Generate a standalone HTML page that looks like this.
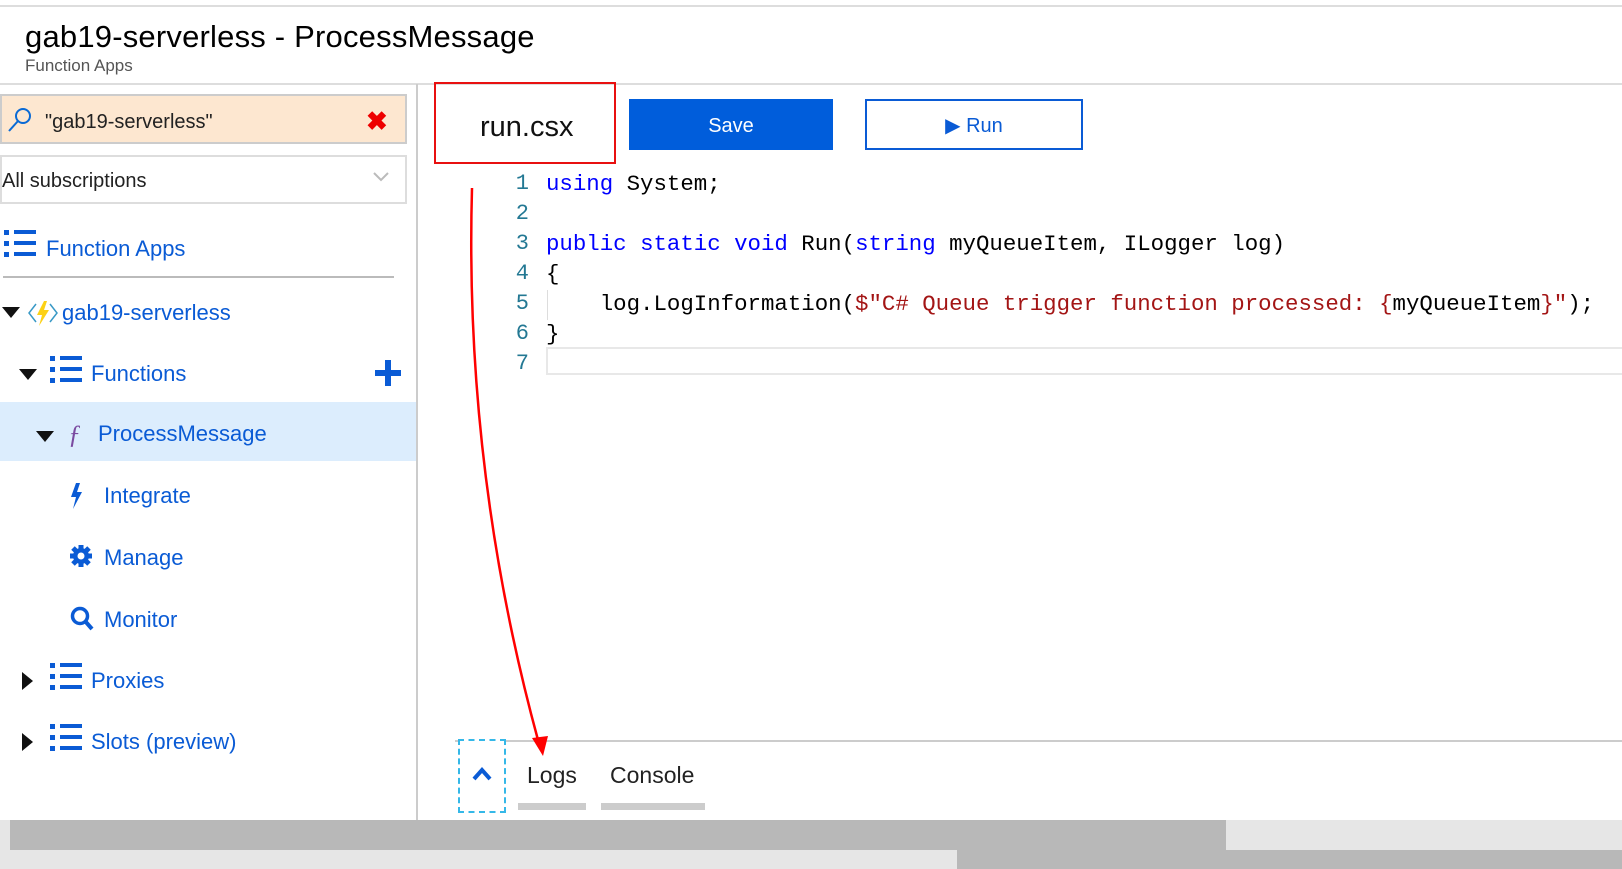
<!DOCTYPE html>
<html><head><meta charset="utf-8"><style>
*{margin:0;padding:0;box-sizing:border-box}
body{width:1622px;height:869px;overflow:hidden;background:#fff;font-family:"Liberation Sans",sans-serif;position:relative}
.a{position:absolute}
.nav{position:absolute;color:#0a5bd5;font-size:22px;white-space:nowrap}
.code{position:absolute;left:546px;font-family:"Liberation Mono",monospace;font-size:22.4px;white-space:pre;color:#000;line-height:30px}
.ln{position:absolute;left:500px;width:29px;text-align:right;font-family:"Liberation Mono",monospace;font-size:22px;color:#237893;line-height:30px}
.k{color:#0000ff}.s{color:#a31515}
.list{position:absolute;width:34px;height:30px}
</style></head><body>
<div class="a" style="left:0;top:5px;width:1622px;height:2px;background:#ddd"></div>
<div class="a" style="left:25px;top:19px;font-size:31px;color:#000;letter-spacing:0.2px">gab19-serverless - ProcessMessage</div>
<div class="a" style="left:25px;top:56px;font-size:17px;color:#555">Function Apps</div>
<div class="a" style="left:0;top:83px;width:1622px;height:2px;background:#ddd"></div>
<div class="a" style="left:416px;top:84px;width:2px;height:736px;background:#ccc"></div>

<div class="a" style="left:0;top:94px;width:407px;height:50px;background:#fde7d0;border:2px solid #ccc"></div>
<svg class="a" style="left:6px;top:106px" width="28" height="28" viewBox="0 0 28 28"><circle cx="17" cy="10" r="7" fill="none" stroke="#0a6ad5" stroke-width="2"/><line x1="12" y1="15" x2="3" y2="25" stroke="#0a6ad5" stroke-width="2"/></svg>
<div class="a" style="left:45px;top:111px;font-size:20px;color:#222">"gab19-serverless"</div>
<div class="a" style="left:366px;top:106px;font-size:26px;color:#e00;font-weight:bold">✖</div>
<div class="a" style="left:0;top:155px;width:407px;height:49px;border:2px solid #ddd"></div>
<div class="a" style="left:2px;top:170px;font-size:20px;color:#222">All subscriptions</div>
<svg class="a" style="left:372px;top:170px" width="18" height="14"><polyline points="2,3 9,10 16,3" fill="none" stroke="#bbb" stroke-width="2"/></svg>

<svg class="list" style="left:4px;top:230px"><g fill="#0a5bd5"><rect x="0" y="0" width="5" height="5"/><rect x="10" y="0" width="22" height="4"/><rect x="0" y="11" width="5" height="5"/><rect x="10" y="11" width="22" height="4"/><rect x="0" y="22" width="5" height="5"/><rect x="10" y="22" width="22" height="4"/></g></svg>
<div class="nav" style="left:46px;top:236px">Function Apps</div>
<div class="a" style="left:3px;top:276px;width:391px;height:2px;background:#bbb"></div>

<div class="a" style="left:2px;top:307px;width:0;height:0;border-left:9px solid transparent;border-right:9px solid transparent;border-top:11px solid #111"></div>
<svg class="a" style="left:27px;top:298px" width="32" height="30"><polyline points="9,6 2,15 9,24" fill="none" stroke="#3999c6" stroke-width="1.5"/><polyline points="23,6 30,15 23,24" fill="none" stroke="#3999c6" stroke-width="1.5"/><polygon points="17,3 10,17 15,17 12,28 22,12 17,12 20,3" fill="#fcd116"/></svg>
<div class="nav" style="left:62px;top:300px">gab19-serverless</div>

<div class="a" style="left:19px;top:369px;width:0;height:0;border-left:9px solid transparent;border-right:9px solid transparent;border-top:11px solid #111"></div>
<svg class="list" style="left:50px;top:356px"><g fill="#0a5bd5"><rect x="0" y="0" width="5" height="5"/><rect x="10" y="0" width="22" height="4"/><rect x="0" y="11" width="5" height="5"/><rect x="10" y="11" width="22" height="4"/><rect x="0" y="22" width="5" height="5"/><rect x="10" y="22" width="22" height="4"/></g></svg>
<div class="nav" style="left:91px;top:361px">Functions</div>
<svg class="a" style="left:375px;top:360px" width="26" height="26"><rect x="10" y="0" width="6" height="26" fill="#0a5bd5"/><rect x="0" y="10" width="26" height="6" fill="#0a5bd5"/></svg>

<div class="a" style="left:0;top:402px;width:416px;height:59px;background:#dcedfd"></div>
<div class="a" style="left:36px;top:431px;width:0;height:0;border-left:9px solid transparent;border-right:9px solid transparent;border-top:11px solid #111"></div>
<div class="a" style="left:68px;top:420px;font-size:26px;color:#7a4aa0;font-family:'Liberation Serif',serif;font-style:italic">ƒ</div>
<div class="nav" style="left:98px;top:421px">ProcessMessage</div>

<svg class="a" style="left:69px;top:483px" width="16" height="26"><polygon points="7,0 2,14 7,14 4,26 13,9 8,9 11,0" fill="#0a5bd5"/></svg>
<div class="nav" style="left:104px;top:483px">Integrate</div>
<svg class="a" style="left:69px;top:544px" width="24" height="24" viewBox="0 0 24 24"><circle cx="12" cy="12" r="8" fill="#0a5bd5"/><g stroke="#0a5bd5" stroke-width="5"><line x1="12" y1="1" x2="12" y2="23"/><line x1="1" y1="12" x2="23" y2="12"/><line x1="4" y1="4" x2="20" y2="20"/><line x1="20" y1="4" x2="4" y2="20"/></g><circle cx="12" cy="12" r="3.5" fill="#fff"/></svg>
<div class="nav" style="left:104px;top:545px">Manage</div>
<svg class="a" style="left:70px;top:606px" width="26" height="26"><circle cx="10" cy="10" r="7.5" fill="none" stroke="#0a5bd5" stroke-width="3.5"/><line x1="15" y1="15" x2="22" y2="23" stroke="#0a5bd5" stroke-width="4"/></svg>
<div class="nav" style="left:104px;top:607px">Monitor</div>

<div class="a" style="left:22px;top:672px;width:0;height:0;border-top:9px solid transparent;border-bottom:9px solid transparent;border-left:11px solid #111"></div>
<svg class="list" style="left:50px;top:663px"><g fill="#0a5bd5"><rect x="0" y="0" width="5" height="5"/><rect x="10" y="0" width="22" height="4"/><rect x="0" y="11" width="5" height="5"/><rect x="10" y="11" width="22" height="4"/><rect x="0" y="22" width="5" height="5"/><rect x="10" y="22" width="22" height="4"/></g></svg>
<div class="nav" style="left:91px;top:668px">Proxies</div>
<div class="a" style="left:22px;top:733px;width:0;height:0;border-top:9px solid transparent;border-bottom:9px solid transparent;border-left:11px solid #111"></div>
<svg class="list" style="left:50px;top:724px"><g fill="#0a5bd5"><rect x="0" y="0" width="5" height="5"/><rect x="10" y="0" width="22" height="4"/><rect x="0" y="11" width="5" height="5"/><rect x="10" y="11" width="22" height="4"/><rect x="0" y="22" width="5" height="5"/><rect x="10" y="22" width="22" height="4"/></g></svg>
<div class="nav" style="left:91px;top:729px">Slots (preview)</div>

<div class="a" style="left:434px;top:82px;width:182px;height:82px;border:2.5px solid #e81010"></div>
<div class="a" style="left:480px;top:111px;font-size:29px;color:#111">run.csx</div>
<div class="a" style="left:629px;top:99px;width:204px;height:51px;background:#005ddb;color:#fff;font-size:20px;text-align:center;line-height:55px">Save</div>
<div class="a" style="left:865px;top:99px;width:218px;height:51px;border:2px solid #0a5bd5;color:#0a5bd5;font-size:20px;text-align:center;line-height:51px">▶ Run</div>

<div class="ln" style="top:169px">1<br>2<br>3<br>4<br>5<br>6<br>7</div>
<div class="a" style="left:546px;top:347px;width:1076px;height:28px;border:2px solid #e8e8e8;border-right:none"></div>
<div class="a" style="left:547px;top:290px;width:1px;height:30px;background:#ddd"></div>
<div class="code" style="top:169px"><span class="k">using</span> System;

<span class="k">public</span> <span class="k">static</span> <span class="k">void</span> Run(<span class="k">string</span> myQueueItem, ILogger log)
{
    log.LogInformation(<span class="s">$"C# Queue trigger function processed: {</span>myQueueItem<span class="s">}"</span>);
}</div>

<div class="a" style="left:455px;top:740px;width:1167px;height:2px;background:#ccc"></div>
<div class="a" style="left:458px;top:739px;width:48px;height:74px;border:2px dashed #35b8e8;background:#fff"></div>
<svg class="a" style="left:471px;top:766px" width="22" height="16"><polyline points="3,13 11,4 19,13" fill="none" stroke="#0a5bd5" stroke-width="4"/></svg>
<div class="a" style="left:527px;top:762px;font-size:23px;color:#222">Logs</div>
<div class="a" style="left:610px;top:762px;font-size:23px;color:#222">Console</div>
<div class="a" style="left:518px;top:803px;width:68px;height:7px;background:#ccc"></div>
<div class="a" style="left:601px;top:803px;width:104px;height:7px;background:#ccc"></div>

<svg class="a" style="left:0;top:0" width="1622" height="869"><path d="M472 188 C468 330 478 520 538 740" fill="none" stroke="#f00" stroke-width="2.5"/><polygon points="532,738 548,736 543,756" fill="#f00"/></svg>

<div class="a" style="left:0;top:820px;width:1622px;height:49px;background:#e6e6e6"></div>
<div class="a" style="left:10px;top:820px;width:1216px;height:30px;background:#b8b8b8"></div>
<div class="a" style="left:957px;top:850px;width:665px;height:19px;background:#b8b8b8"></div>
</body></html>
